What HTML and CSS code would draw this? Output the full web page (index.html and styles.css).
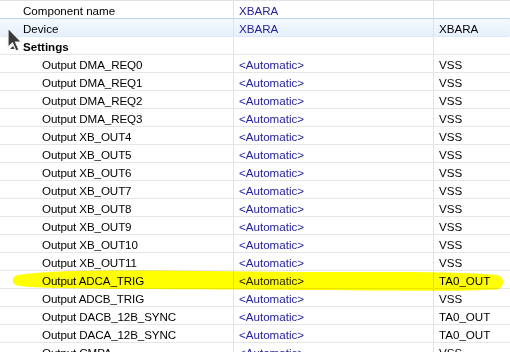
FILE: index.html
```html
<!DOCTYPE html>
<html>
<head>
<meta charset="utf-8">
<link rel="stylesheet" href="styles.css">
</head>
<body>
<div class="view">
  <div class="grid">
    <div class="row"><div class="c1">Component name</div><div class="c2">XBARA</div><div class="c3"></div></div>
    <div class="row hover"><div class="c1">Device</div><div class="c2">XBARA</div><div class="c3">XBARA</div></div>
    <div class="row"><div class="c1 group"><span class="exp"></span>Settings</div><div class="c2"></div><div class="c3"></div></div>
    <div class="row"><div class="c1 child">Output DMA_REQ0</div><div class="c2">&lt;Automatic&gt;</div><div class="c3">VSS</div></div>
    <div class="row"><div class="c1 child">Output DMA_REQ1</div><div class="c2">&lt;Automatic&gt;</div><div class="c3">VSS</div></div>
    <div class="row"><div class="c1 child">Output DMA_REQ2</div><div class="c2">&lt;Automatic&gt;</div><div class="c3">VSS</div></div>
    <div class="row"><div class="c1 child">Output DMA_REQ3</div><div class="c2">&lt;Automatic&gt;</div><div class="c3">VSS</div></div>
    <div class="row"><div class="c1 child">Output XB_OUT4</div><div class="c2">&lt;Automatic&gt;</div><div class="c3">VSS</div></div>
    <div class="row"><div class="c1 child">Output XB_OUT5</div><div class="c2">&lt;Automatic&gt;</div><div class="c3">VSS</div></div>
    <div class="row"><div class="c1 child">Output XB_OUT6</div><div class="c2">&lt;Automatic&gt;</div><div class="c3">VSS</div></div>
    <div class="row"><div class="c1 child">Output XB_OUT7</div><div class="c2">&lt;Automatic&gt;</div><div class="c3">VSS</div></div>
    <div class="row"><div class="c1 child">Output XB_OUT8</div><div class="c2">&lt;Automatic&gt;</div><div class="c3">VSS</div></div>
    <div class="row"><div class="c1 child">Output XB_OUT9</div><div class="c2">&lt;Automatic&gt;</div><div class="c3">VSS</div></div>
    <div class="row"><div class="c1 child">Output XB_OUT10</div><div class="c2">&lt;Automatic&gt;</div><div class="c3">VSS</div></div>
    <div class="row"><div class="c1 child">Output XB_OUT11</div><div class="c2">&lt;Automatic&gt;</div><div class="c3">VSS</div></div>
    <div class="row"><div class="c1 child">Output ADCA_TRIG</div><div class="c2">&lt;Automatic&gt;</div><div class="c3">TA0_OUT</div></div>
    <div class="row"><div class="c1 child">Output ADCB_TRIG</div><div class="c2">&lt;Automatic&gt;</div><div class="c3">VSS</div></div>
    <div class="row"><div class="c1 child">Output DACB_12B_SYNC</div><div class="c2">&lt;Automatic&gt;</div><div class="c3">TA0_OUT</div></div>
    <div class="row"><div class="c1 child">Output DACA_12B_SYNC</div><div class="c2">&lt;Automatic&gt;</div><div class="c3">TA0_OUT</div></div>
    <div class="row"><div class="c1 child">Output CMPA</div><div class="c2">&lt;Automatic&gt;</div><div class="c3">VSS</div></div>
  </div>
  <svg class="marker" width="510" height="30" viewBox="0 0 510 30">
    <path d="M18 6 C 40 2, 90 1, 150 1.5 C 230 2, 300 3.5, 380 3 C 430 3, 470 3.5, 497 6 C 505 8, 505 18, 497 20.5 C 470 22, 430 22, 380 21.5 C 300 21, 200 20.5, 120 20 C 70 19.5, 30 19, 17 16.5 C 11 14.5, 11 8, 18 6 Z" fill="#ffff00"/>
  </svg>
  <svg class="cursor" width="17" height="27" viewBox="0 0 17 27">
    <path d="M1 1 L1 20.5 L5.5 16 L9 24 L12 22.8 L8.5 15 L14.5 15 Z" fill="#3a3a3a" stroke="#f4f4f4" stroke-width="1.2" stroke-linejoin="round"/>
  </svg>
</div>
</body>
</html>
```

FILE: styles.css
```css
html, body {
  margin: 0;
  padding: 0;
  background: #ffffff;
}
.view {
  position: relative;
  width: 510px;
  height: 352px;
  overflow: hidden;
  font-family: "Liberation Sans", Arial, sans-serif;
  font-size: 11.6px;
  color: #000000;
}
.grid {
  border-top: 1px solid #e2e2e2;
}
.row {
  display: grid;
  grid-template-columns: 233px 200px 1fr;
  height: 17px;
  border-bottom: 1px solid #e6e6e6;
  line-height: 19px;
}
.row > div {
  white-space: nowrap;
  overflow: hidden;
}
.c1 {
  padding-left: 23px;
  position: relative;
}
.c1.child {
  padding-left: 42px;
  letter-spacing: -0.1px;
}
.c2 {
  border-left: 1px solid #e3e3e3;
  padding-left: 5px;
  color: #25229a;
}
.c3 {
  border-left: 1px solid #e3e3e3;
  padding-left: 5px;
}
.group {
  font-weight: bold;
}
.exp {
  position: absolute;
  left: 10px;
  top: 6px;
  width: 0;
  height: 0;
  border-left: 6px solid transparent;
  border-bottom: 6px solid #404040;
}
.row.hover {
  margin-top: -1px;
  height: 17px;
  border-top: 1px solid #b9d4f3;
  border-bottom: 1px solid #dde9f7;
  border-radius: 2px;
  background: linear-gradient(#f5f9fe, #e6f0fc);
}
.marker {
  position: absolute;
  left: 0;
  top: 269px;
  mix-blend-mode: multiply;
}
.cursor {
  position: absolute;
  left: 7px;
  top: 27px;
}
```
